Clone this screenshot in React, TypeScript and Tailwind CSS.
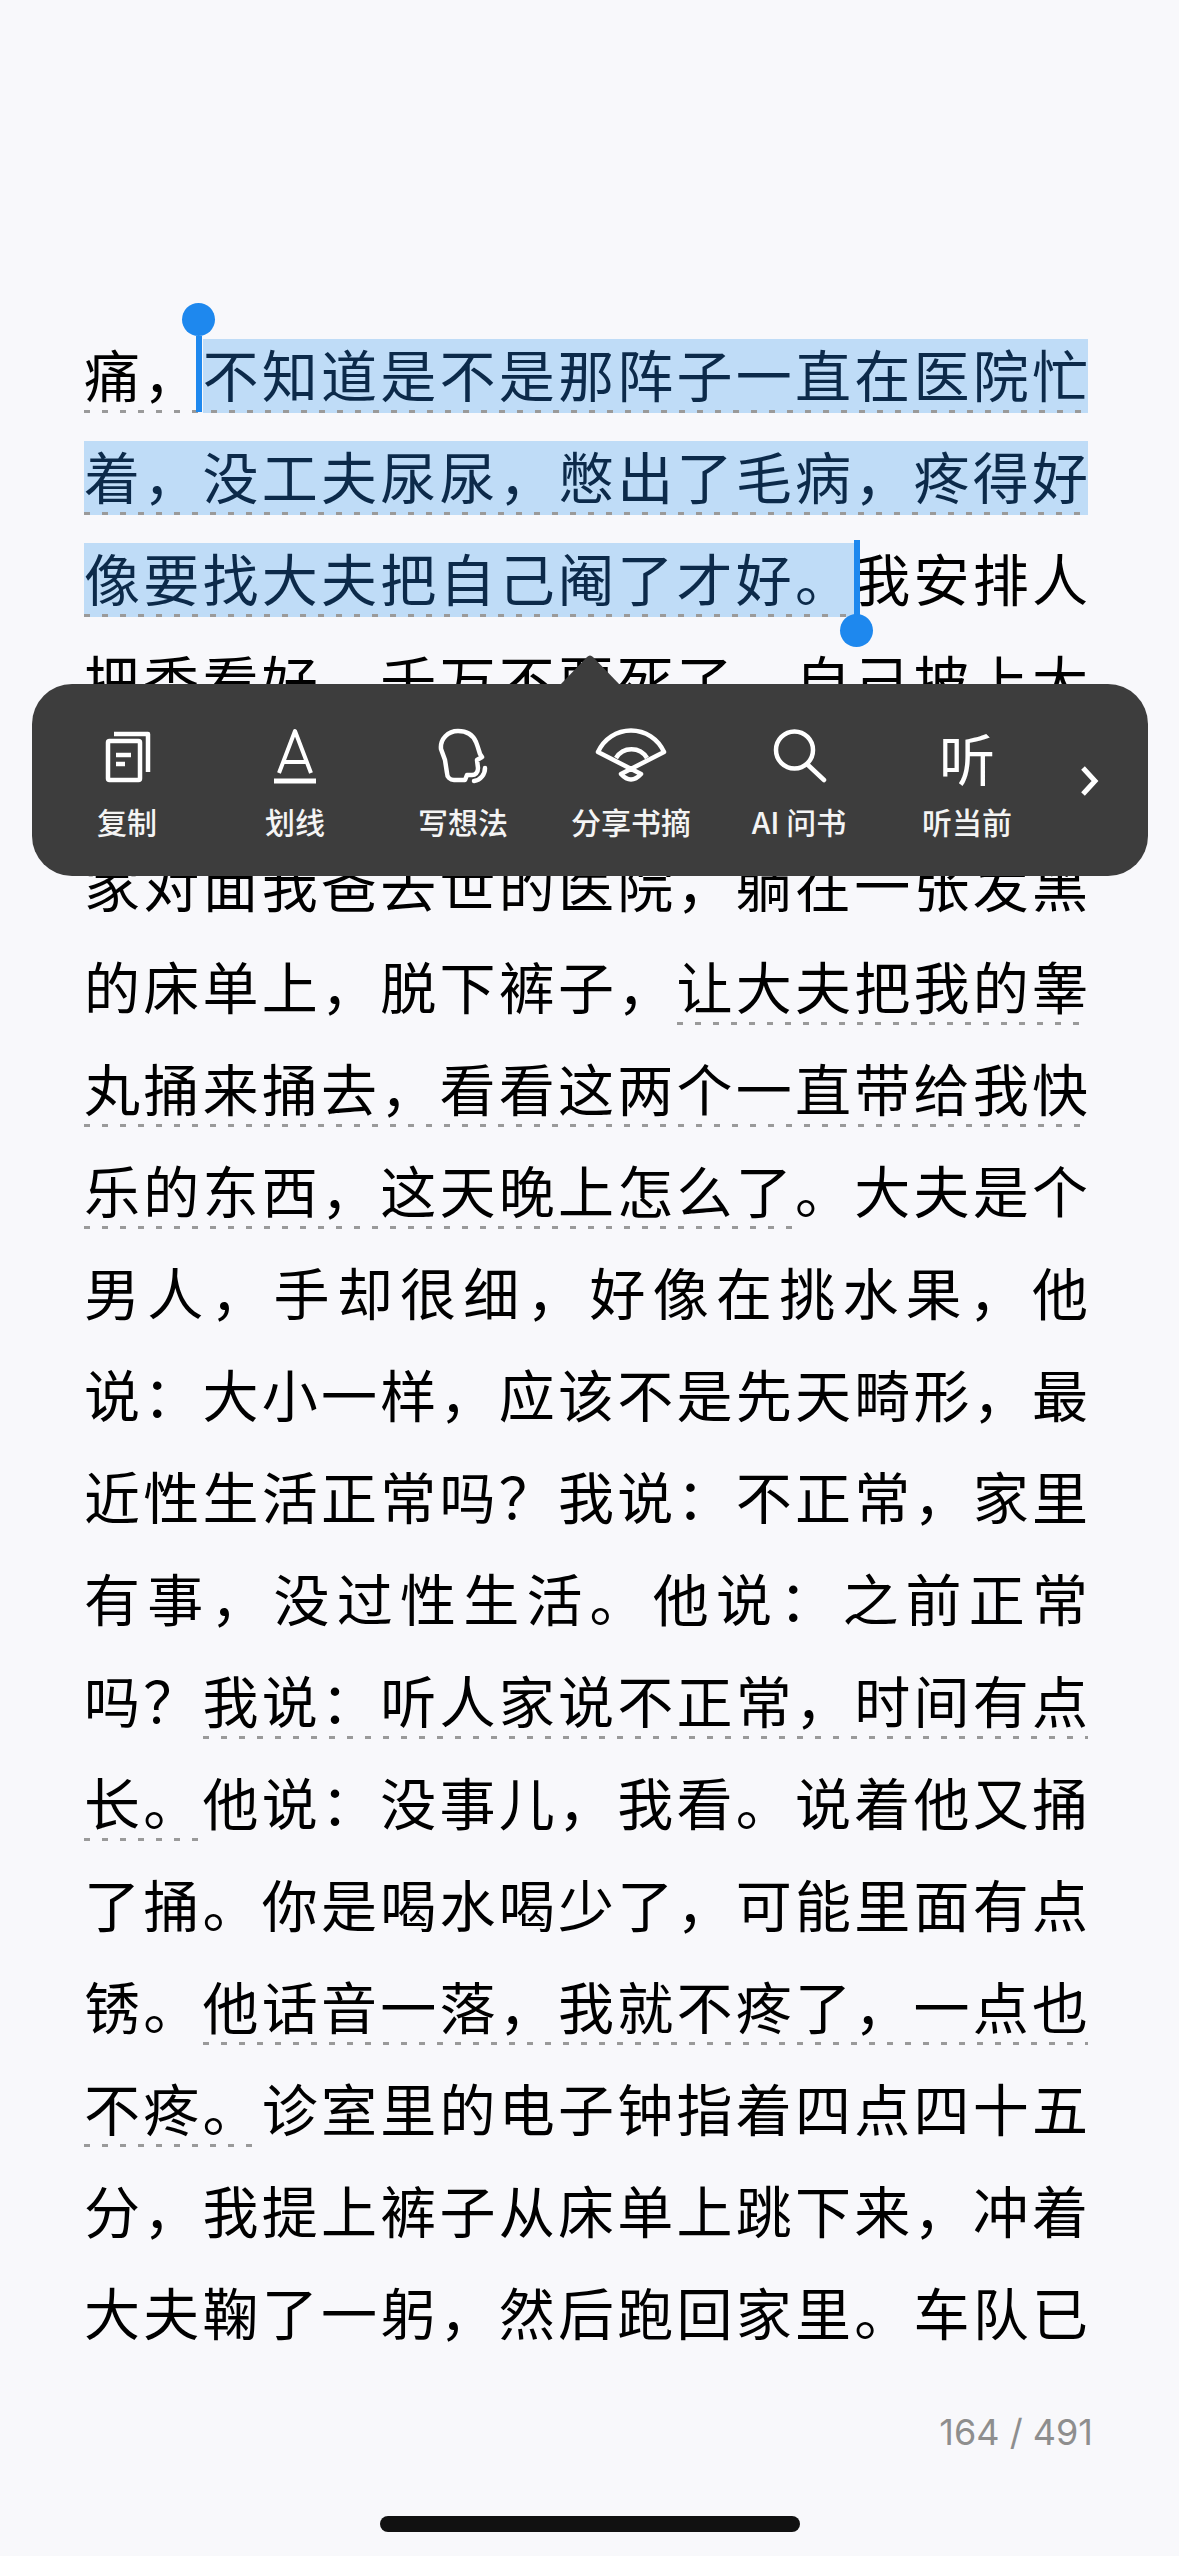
const cjk = "font-['Noto_Sans_CJK_SC',sans-serif]";

// selection colour and the dotted "others underlined this" marks
const plain = "";
const dotted =
  "[background:repeating-linear-gradient(90deg,#9a9a9a_0,#9a9a9a_6px,transparent_6px,transparent_18px)_left_bottom/100%_3px_no-repeat]";
const selected =
  "text-[#0c2a4a] [background:repeating-linear-gradient(90deg,#9a9a9a_0,#9a9a9a_6px,transparent_6px,transparent_18px)_left_bottom/100%_3px_no-repeat,linear-gradient(#bfdcf7,#bfdcf7)_left_bottom/100%_74px_no-repeat]";
// first line starts mid-way through the dot row, so shift the dots to stay in step
const selectedFirst =
  "text-[#0c2a4a] [background:repeating-linear-gradient(90deg,transparent_0,transparent_8px,#9a9a9a_8px,#9a9a9a_14px,transparent_14px,transparent_18px)_left_bottom/100%_3px_repeat-x,linear-gradient(#bfdcf7,#bfdcf7)_left_bottom/100%_74px_no-repeat]";

type Seg = [string, string];

const lines: Seg[][] = [
  [["痛，", dotted], ["不知道是不是那阵子一直在医院忙", selectedFirst]],
  [["着，没工夫尿尿，憋出了毛病，疼得好", selected]],
  [["像要找大夫把自己阉了才好。", selected], ["我安排人", plain]],
  [["把秀看好，千万不要死了，自己披上大", plain]],
  [],
  [["家对面我爸去世的医院，躺在一张发黑", plain]],
  [["的床单上，脱下裤子，", plain], ["让大夫把我的睾", dotted]],
  [["丸捅来捅去，看看这两个一直带给我快", dotted]],
  [["乐的东西，这天晚上怎么了", dotted], ["。大夫是个", plain]],
  [["男人，手却很细，好像在挑水果，他", plain]],
  [["说：大小一样，应该不是先天畸形，最", plain]],
  [["近性生活正常吗？我说：不正常，家里", plain]],
  [["有事，没过性生活。他说：之前正常", plain]],
  [["吗？", plain], ["我说：听人家说不正常，时间有点", dotted]],
  [["长。", dotted], ["他说：没事儿，我看。说着他又捅", plain]],
  [["了捅。你是喝水喝少了，可能里面有点", plain]],
  [["锈。", plain], ["他话音一落，我就不疼了，一点也", dotted]],
  [["不疼。", dotted], ["诊室里的电子钟指着四点四十五", plain]],
  [["分，我提上裤子从床单上跳下来，冲着", plain]],
  [["大夫鞠了一躬，然后跑回家里。车队已", plain]],
];

function Icon({ children }: { children: React.ReactNode }) {
  return (
    <svg
      viewBox="0 0 60 60"
      className="h-[60px] w-[60px] overflow-visible"
      fill="none"
      stroke="white"
      strokeWidth="4.5"
      strokeLinejoin="round"
    >
      {children}
    </svg>
  );
}

const tools: { label: string; icon: React.ReactNode }[] = [
  {
    label: "复制",
    icon: (
      <Icon>
        <rect x="11" y="14" width="32" height="39" rx="1.5" />
        <path d="M17 7H51V45" />
        <path d="M19 28H34M19 37H28" />
      </Icon>
    ),
  },
  {
    label: "划线",
    icon: (
      <Icon>
        <path d="M14 46L30 4L46 46M19 35H41" strokeWidth="4" />
        <path d="M9 54H51" strokeWidth="5" />
      </Icon>
    ),
  },
  {
    label: "写想法",
    icon: (
      <Icon>
        <path d="M25 4C34 4 40 8 43 15C45 20 46 24 47 27L49 30L44 33L45 41C45 46 42 48 39 48H34L32 53H21C17 53 14 50 14 46L12 33L8 22C7 12 15 4 25 4Z" />
        <path d="M52 41C52 47 48 53 41 54" strokeLinecap="round" />
      </Icon>
    ),
  },
  {
    label: "分享书摘",
    icon: (
      <Icon>
        <path d="M-3 25A36 36 0 0 1 63 25L20 47Q30 58 40 47L-3 25Z" />
        <path d="M15 31A18 18 0 0 1 46 31" />
      </Icon>
    ),
  },
  {
    label: "AI 问书",
    icon: (
      <Icon>
        <circle cx="25.5" cy="23" r="18.5" />
        <path d="M39 38L55 53" strokeLinecap="round" />
      </Icon>
    ),
  },
  {
    label: "听当前",
    icon: <span className="block h-[60px] text-center text-[56px] leading-[60px] font-normal text-white">听</span>,
  },
];

function Caret({ pos, knobBelow }: { pos: string; knobBelow?: boolean }) {
  return (
    <div className={`absolute flex w-[33px] flex-col items-center ${pos}`}>
      {!knobBelow && <div className="h-[33px] w-[33px] rounded-full bg-[#1e88ee]" />}
      <div className="h-[76px] w-[6px] bg-[#1e88ee]" />
      {knobBelow && <div className="-mt-[2px] h-[33px] w-[33px] rounded-full bg-[#1e88ee]" />}
    </div>
  );
}

export default function App() {
  return (
    <div className={`relative h-[2556px] w-[1179px] overflow-hidden bg-[#f8f8fb] ${cjk}`}>
      <div className="pt-[322px] pl-[84px] pr-[91px]">
        {lines.map((segs, i) => (
          <div
            key={i}
            className="h-[102px] overflow-hidden text-justify text-[56px] leading-[102px] whitespace-nowrap text-black [text-align-last:justify]"
          >
            {segs.map(([text, cls], j) => (
              <span key={j} className={cls}>
                {text}
              </span>
            ))}
          </div>
        ))}
      </div>

      <div className="mt-[48px] flex justify-end pr-[86px] font-['Inter',sans-serif] text-[36px] leading-[44px] text-[#8e8e8e]">
        164 / 491
      </div>
      <div className="mx-auto mt-[62px] h-[16px] w-[420px] rounded-full bg-[#111111]" />

      <Caret pos="left-[182px] top-[303px]" />
      <Caret pos="left-[840px] top-[540px]" knobBelow />

      {/* floating toolbar */}
      <div className="absolute left-[32px] top-[684px] flex h-[192px] w-[1116px] rounded-[40px] bg-[#3d3d3d] pl-[11px] pt-[43px]">
        <svg viewBox="0 0 60 30" className="absolute left-[528px] top-[-29px] h-[30px] w-[60px]">
          <path d="M0 30L27 2Q30 -1 33 2L60 30Z" fill="#3d3d3d" />
        </svg>
        {tools.map((t) => (
          <div key={t.label} className="flex w-[168px] flex-col items-center">
            {t.icon}
            <span className="mt-[15px] text-[30px] leading-[38px] font-medium text-[#f4f4f4]">{t.label}</span>
          </div>
        ))}
        <div className="flex w-[76px] justify-center pt-[38px]">
          <svg viewBox="0 0 20 32" className="h-[32px] w-[20px]" fill="none" stroke="white" strokeWidth="5">
            <path d="M4 3L16 16L4 29" />
          </svg>
        </div>
      </div>
    </div>
  );
}
